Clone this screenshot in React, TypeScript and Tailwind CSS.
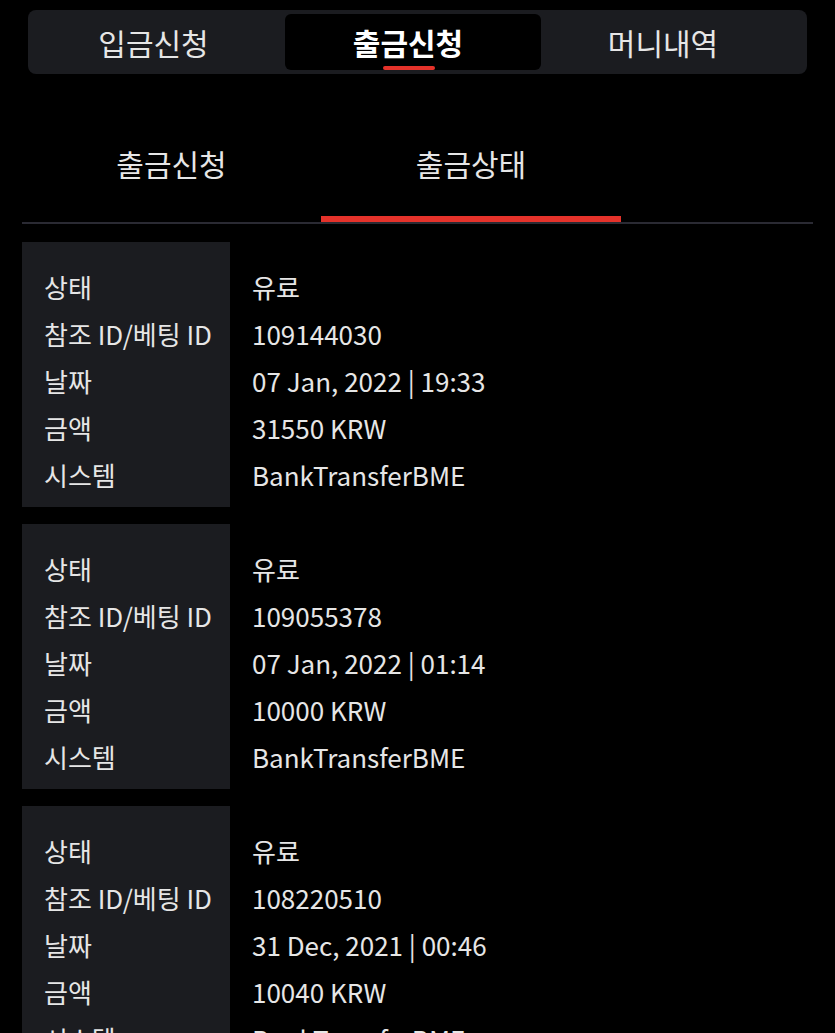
import React from "react";

const records = [
  { status: "유료", id: "109144030", date: "07 Jan, 2022 | 19:33", amount: "31550 KRW", system: "BankTransferBME" },
  { status: "유료", id: "109055378", date: "07 Jan, 2022 | 01:14", amount: "10000 KRW", system: "BankTransferBME" },
  { status: "유료", id: "108220510", date: "31 Dec, 2021 | 00:46", amount: "10040 KRW", system: "BankTransferBME" },
];

const labels = ["상태", "참조 ID/베팅 ID", "날짜", "금액", "시스템"];

export default function App() {
  return (
    <div
      className="min-h-[1033px] w-full bg-black text-[#e6e6e6] overflow-hidden"
      style={{ fontFamily: '"Noto Sans CJK KR", "Noto Sans", sans-serif' }}
    >
      <div className="px-[28px] pt-[10px]">
        <div className="flex h-[64px] rounded-[8px] bg-[#1b1c20] py-[4px] pl-[4px]">
          <div className="flex w-[253px] items-center justify-center pr-[10px] text-[30px] leading-none">입금신청</div>
          <div className="relative flex w-[256px] items-center justify-center rounded-[6px] bg-black pr-[10px] text-[30px] font-bold leading-none text-white">
            출금신청
            <div className="absolute bottom-[0px] left-[98px] h-[4px] w-[52px] rounded-full bg-[#e5322a]" />
          </div>
          <div className="flex w-[256px] items-center justify-center pr-[12px] text-[30px] leading-none">머니내역</div>
        </div>
      </div>

      <div className="mx-[22px] mt-[50px] flex border-b-[2px] border-[#2a2a33]">
        <div className="flex h-[98px] w-[299px] items-center justify-center pb-[20px] text-[30px] leading-none">출금신청</div>
        <div className="flex h-[98px] w-[300px] items-center justify-center border-b-[6px] border-[#e5322a] pb-[14px] text-[30px] leading-none">출금상태</div>
      </div>

      <div className="mx-[22px] mt-[18px] flex flex-col gap-[17px]">
        {records.map((r, i) => {
          const values = [r.status, r.id, r.date, r.amount, r.system];
          return (
            <div key={i} className="flex">
              <div className="w-[208px] shrink-0 bg-[#1b1c20] pl-[22px] pt-[21px] pb-[9px]">
                {labels.map((l) => (
                  <div key={l} className="h-[47px] text-[26px] leading-[47px] whitespace-nowrap">{l}</div>
                ))}
              </div>
              <div className="pl-[22px] pt-[21px] pb-[9px]">
                {values.map((v, j) => (
                  <div key={j} className="h-[47px] text-[26px] leading-[47px] whitespace-nowrap">{v}</div>
                ))}
              </div>
            </div>
          );
        })}
      </div>
    </div>
  );
}
